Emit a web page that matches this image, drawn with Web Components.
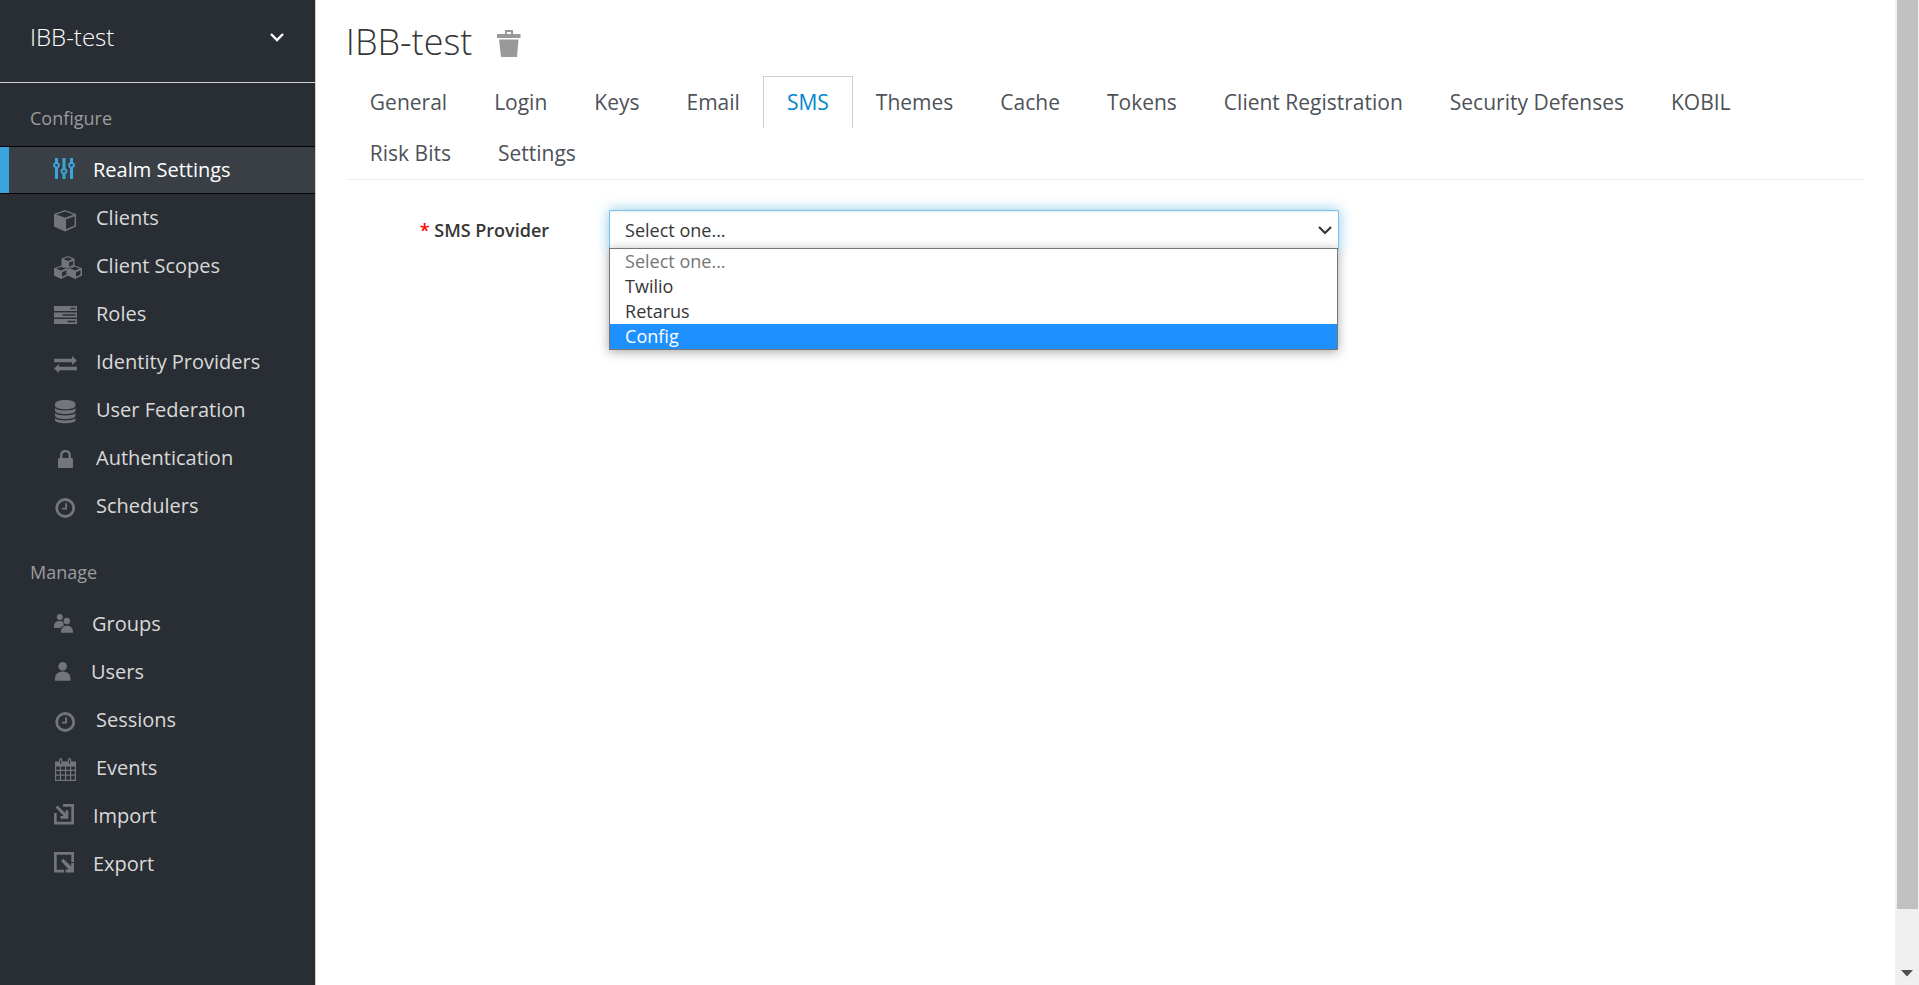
<!DOCTYPE html>
<html lang="en">
<head>
<meta charset="utf-8">
<meta name="viewport" content="width=device-width, initial-scale=1">
<title>Realm Settings</title>
<style>
html, body { height: 100%; margin: 0; }
body { font-family: "Open Sans", "Noto Sans", sans-serif; font-size: 18px; color: #363636; background: #fff; overflow: hidden; }
</style>
</head>
<body>
<admin-shell>
  <side-bar slot="side">
    <realm-picker slot="top">IBB-test</realm-picker>
    <nav-group label="Configure">
      <nav-item icon="sliders" active>Realm Settings</nav-item>
      <nav-item icon="cube">Clients</nav-item>
      <nav-item icon="cubes">Client Scopes</nav-item>
      <nav-item icon="tasks">Roles</nav-item>
      <nav-item icon="exchange">Identity Providers</nav-item>
      <nav-item icon="database">User Federation</nav-item>
      <nav-item icon="lock">Authentication</nav-item>
      <nav-item icon="clock">Schedulers</nav-item>
    </nav-group>
    <nav-group label="Manage">
      <nav-item icon="groups">Groups</nav-item>
      <nav-item icon="user">Users</nav-item>
      <nav-item icon="clock">Sessions</nav-item>
      <nav-item icon="calendar">Events</nav-item>
      <nav-item icon="import">Import</nav-item>
      <nav-item icon="export">Export</nav-item>
    </nav-group>
  </side-bar>
  <page-title>IBB-test</page-title>
  <tab-bar>
    <tab-item>General</tab-item>
    <tab-item>Login</tab-item>
    <tab-item>Keys</tab-item>
    <tab-item>Email</tab-item>
    <tab-item active>SMS</tab-item>
    <tab-item>Themes</tab-item>
    <tab-item>Cache</tab-item>
    <tab-item>Tokens</tab-item>
    <tab-item>Client Registration</tab-item>
    <tab-item>Security Defenses</tab-item>
    <tab-item>KOBIL</tab-item>
    <tab-item>Risk Bits</tab-item>
    <tab-item>Settings</tab-item>
  </tab-bar>
  <select-field label="SMS Provider" options="Select one...|Twilio|Retarus|Config" highlighted="3"></select-field>
</admin-shell>

<script>
// Icon shapes: [width of the box, markup]; every box is 28px high.
const ICONS = {
  sliders: [20, '<path d="M1 2h3v4.200a3.200 3.200 0 0 1 0 5.900V23H1V12.100a3.200 3.200 0 0 1 0-5.900zM8.500 2h3v10.200a3.200 3.200 0 0 1 0 5.900V23h-3v-4.900a3.200 3.200 0 0 1 0-5.900zM16 2h3v4.200a3.200 3.200 0 0 1 0 5.900V23h-3V12.100a3.200 3.200 0 0 1 0-5.900z"/><g fill="#393f45"><circle cx="2.500" cy="9.200" r="1.300"/><circle cx="10" cy="15.200" r="1.300"/><circle cx="17.500" cy="9.200" r="1.300"/></g>'],
  cube: [23, '<path fill-rule="evenodd" d="M11 6l11 4v12.500L11 27.500 0 22.500V10zM2.200 10.400L11 13.700l8.800-3.300L11 7.500zM12 15.500v9.700l8.600-3.800v-9.200z"/>'],
  cubes: [23, '<path fill-rule="evenodd" d="M14 4l6.500 2.600v7L14 17l-6.500-3.400v-7zM9.500 7l4.500 1.900L18.500 7 14 5.200zM15 10.600v4.200l4-2V8.900zM7 13.500l7 2.800v7.300L7 27l-7-3.400v-7.300zM2.200 16.600L7 18.600l4.800-2L7 14.800zM8 20.200v4.500l4.500-2.200v-4.200zM21 13.500l7 2.800v7.300L21 27l-7-3.400v-7.300zM16.200 16.600l4.800 2 4.800-2-4.800-1.800zM22 20.200v4.500l4.500-2.200v-4.200z"/>'],
  tasks: [23, '<path fill-rule="evenodd" d="M0 6h23v5H0zM16.500 7.800v1.500h5V7.800zM0 12.500h23v5H0zM8.500 14.300v1.500h13v-1.500zM0 19h23v5H0zM13.500 20.800v1.500h8v-1.500z"/>'],
  exchange: [23, '<path d="M0 10.800h18V8l5 4.500-5 4.500v-2.700H0zM23 18.800v3.400H5V25l-5-4.500L5 16v2.800z"/>'],
  database: [23, '<path d="M1 8c0-5.300 20.500-5.300 20.500 0v1.500c0 5-20.500 5-20.500 0zM1 12.200c3.500 3 17 3 20.500 0v2.300c0 4.800-20.500 4.800-20.500 0zM1 17.200c3.500 3 17 3 20.500 0v2.300c0 4.800-20.500 4.800-20.500 0zM1 22.200c3.500 3 17 3 20.500 0V24c0 4.300-20.500 4.300-20.500 0z"/>'],
  lock: [23, '<path fill-rule="evenodd" d="M6 14v-2.800a5.500 5.500 0 0 1 11 0V14h.8q1.200 0 1.200 1.200v7.600q0 1.200-1.200 1.200H5.200Q4 24 4 22.800v-7.600Q4 14 5.200 14zM8.500 14h6v-2.800a3 3 0 0 0-6 0z"/>'],
  clock: [23, '<circle cx="11.200" cy="16" r="8.500" fill="none" stroke="currentColor" stroke-width="2.800"/><path d="M11.200 11.200h1.800v6.300H8v-1.700h3.200z"/>'],
  groups: [19, '<circle cx="5.800" cy="7" r="3"/><circle cx="12.800" cy="11" r="3.200"/><path d="M0 18v-1.500c0-6 6-6.300 9.500-4.200-.3 1.700-.2 2.500.5 3.500-2.300.5-2.700 1.200-3.500 2.200zM7 22.800v-1.500c0-7.500 12-7.500 12 0v1.500z"/>'],
  user: [18, '<circle cx="8.700" cy="8.200" r="4.300"/><path d="M1 22.800v-2.300c0-9.500 15.500-9.500 15.500 0v2.300z"/>'],
  calendar: [23, '<path fill-rule="evenodd" d="M1 7.500h4V6q0-2 1.700-2T8.400 6v1.500h5.400V6q0-2 1.700-2t1.700 2v1.500H22V27H1zM2.200 12.500v3.200h3.600v-3.200zM7 12.500v3.200h4v-3.200zM12.200 12.500v3.200h3.800v-3.200zM17.200 12.500v3.200h3.600v-3.200zM2.200 16.900v3.600h3.600v-3.600zM7 16.900v3.600h4v-3.600zM12.200 16.900v3.600h3.800v-3.600zM17.200 16.900v3.600h3.600v-3.600zM2.200 21.700v4.100h3.600v-4.100zM7 21.700v4.100h4v-4.100zM12.200 21.700v4.100h3.800v-4.100zM17.200 21.700v4.100h3.600v-4.100zM6.200 5.500V10h1V5.500zM15 5.500V10h1V5.500z"/>'],
  import: [20, '<path d="M9 2h11v20.500H0V11h2.700v8.800h14.600V4.700H9zM1.500 5.500l2-2 8 7.800V8.200h2.800v8.600H6.500V14h3.200z"/>'],
  export: [20, '<path d="M0 2h20v10h-2.700V4.700H2.700v15H10v2.800H0zM7 11l2.200-2.200 8 7.500v-3.300H20v9.500h-8.500v-3h3.200z"/>'],
};

function define(name, html, setup) {
  const template = document.createElement('template');
  template.innerHTML = html;
  customElements.define(name, class extends HTMLElement {
    constructor() {
      super();
      this.attachShadow({ mode: 'open' }).append(template.content.cloneNode(true));
    }
    connectedCallback() { if (setup) setup(this, this.shadowRoot); }
  });
}

define('scroll-track', `
<style>
:host { display: flex; flex-direction: column; justify-content: space-between; align-items: center; box-sizing: border-box; width: 24px; padding: 0 0 8px; background: #f0f0f0; }
.thumb { width: 21px; height: 93%; background: #c1c1c1; }
svg { display: block; }
</style>
<div class="thumb"></div>
<svg width="12" height="7" viewBox="0 0 12 7" aria-hidden="true"><path d="M0 0h12L6 6.500z" fill="#505050"/></svg>`);

define('admin-shell', `
<style>
:host { display: grid; grid-template-columns: minmax(0, 1fr) 24px; height: 100%; }
.page { display: grid; grid-template-columns: minmax(0, 1fr) minmax(0, 5fr); }
main { padding: 17px 30px 0; }
</style>
<div class="page">
  <slot name="side"></slot>
  <main><slot></slot></main>
</div>
<scroll-track></scroll-track>`);

define('side-bar', `
<style>
:host { display: block; background: #292e34; border-right: 1px solid #d1d1d1; }
</style>
<slot name="top"></slot>
<nav><slot></slot></nav>`);

define('realm-picker', `
<style>
:host { display: block; border-bottom: 1px solid #d1d1d1; }
button { display: flex; justify-content: space-between; align-items: center; box-sizing: border-box; width: 100%; height: 82px; padding: 0 30px 8px; border: 0; background: none; color: #fff; font: 300 24px/36px "Open Sans", sans-serif; }
svg { display: block; }
</style>
<button type="button"><span><slot></slot></span><svg width="16" height="10" viewBox="0 0 16 10" aria-hidden="true"><path d="M2 2l6 6 6-6" fill="none" stroke="#fff" stroke-width="2.400"/></svg></button>`);

define('nav-group', `
<style>
:host { display: block; padding-bottom: 7px; }
h2 { margin: 0; padding: 22px 30px 14px; font-size: 18px; font-weight: 400; line-height: 27px; color: #9c9c9c; }
</style>
<h2></h2>
<div role="list"><slot></slot></div>`,
(el, root) => { root.querySelector('h2').textContent = el.getAttribute('label'); });

define('nav-item', `
<style>
:host { display: block; }
a { display: flex; align-items: center; box-sizing: border-box; height: 48px; padding-left: 54px; color: #d9d9d9; font-size: 20px; line-height: 30px; text-decoration: none; }
svg { display: block; flex: none; overflow: visible; margin-right: 19px; color: #72767b; fill: currentColor; }
:host([active]) a { border: solid #030303; border-width: 1px 0; padding-left: 0; background: #393f45; color: #fff; }
:host([active]) a::before { content: ""; align-self: stretch; width: 9px; margin-right: 45px; background: #39a5dc; }
:host([active]) svg { color: #39a5dc; }
</style>
<a href="#" role="listitem"><svg height="28" aria-hidden="true"></svg><span><slot></slot></span></a>`,
(el, root) => {
  const [width, shape] = ICONS[el.getAttribute('icon')];
  const svg = root.querySelector('svg');
  svg.setAttribute('width', width);
  svg.setAttribute('viewBox', '0 0 ' + width + ' 28');
  svg.innerHTML = shape;
});

define('page-title', `
<style>
:host { display: flex; align-items: center; gap: 25px; height: 50px; }
h1 { margin: 0; font-size: 36px; font-weight: 300; line-height: 50px; }
button { padding: 0; border: 0; background: none; }
svg { display: block; }
</style>
<h1><slot></slot></h1>
<button type="button" aria-label="Delete realm"><svg width="24" height="30" viewBox="0 0 24 30" aria-hidden="true"><path fill="#999" fill-rule="evenodd" d="M8 3h8v4h7.500v4H0V7h8zM10 5v2h4V5zM2 12.500h19.500L20 30H4z"/></svg></button>`);

define('tab-bar', `
<style>
:host { display: flex; flex-wrap: wrap; padding: 9px 0 1px; border-bottom: 1px solid #ededec; }
</style>
<slot></slot>`);

define('tab-item', `
<style>
:host { display: block; margin: 0 -1px -1px 0; }
a { display: block; padding: 9px 23px; border: 1px solid transparent; border-bottom: 0; color: #4d5258; font-size: 21px; line-height: 33px; text-decoration: none; }
:host([active]) a { border-color: #d1d1d1; color: #0088ce; }
</style>
<a href="#"><slot></slot></a>`);

define('select-field', `
<style>
:host { display: flex; padding-top: 30px; }
label { box-sizing: border-box; width: 17.330%; padding: 7px 60px 0 0; text-align: right; font-size: 18px; font-weight: 600; line-height: 27px; }
label span { color: #f00; }
.control { position: relative; width: 48.040%; }
select { display: block; box-sizing: border-box; width: 100%; height: 40px; padding: 0 40px 0 15px; border: 1px solid #7dc3e8; border-radius: 1px; appearance: none; background: #fff; color: #363636; font: 400 18px/27px "Open Sans", sans-serif; box-shadow: inset 0 1px 2px rgba(0,0,0,.08), 0 0 14px rgba(57,165,220,.600); outline: 0; }
svg { position: absolute; right: 6px; top: 15px; pointer-events: none; }
ul { position: absolute; top: 38px; left: 0; right: 1px; margin: 0; padding: 0; list-style: none; border: 1px solid #767676; background: #fff; box-shadow: 0 2px 10px rgba(0,0,0,.350); }
li { padding-left: 15px; line-height: 25px; }
li:first-child { color: #767676; }
li[aria-selected="true"] { background: #1e90ff; color: #fff; }
</style>
<label for="provider"><span>*</span> <b style="font-weight:inherit"></b></label>
<div class="control">
  <select id="provider"></select>
  <svg width="16" height="10" viewBox="0 0 16 10" aria-hidden="true"><path d="M2 2l6 6 6-6" fill="none" stroke="#363636" stroke-width="2.200"/></svg>
  <ul role="listbox" aria-label="Providers"></ul>
</div>`,
(el, root) => {
  root.querySelector('b').textContent = el.getAttribute('label');
  const highlighted = Number(el.getAttribute('highlighted'));
  el.getAttribute('options').split('|').forEach((text, i) => {
    root.querySelector('select').add(new Option(text));
    const li = document.createElement('li');
    li.setAttribute('role', 'option');
    li.setAttribute('aria-selected', String(i === highlighted));
    li.textContent = text;
    root.querySelector('ul').append(li);
  });
});
</script>
</body>
</html>
